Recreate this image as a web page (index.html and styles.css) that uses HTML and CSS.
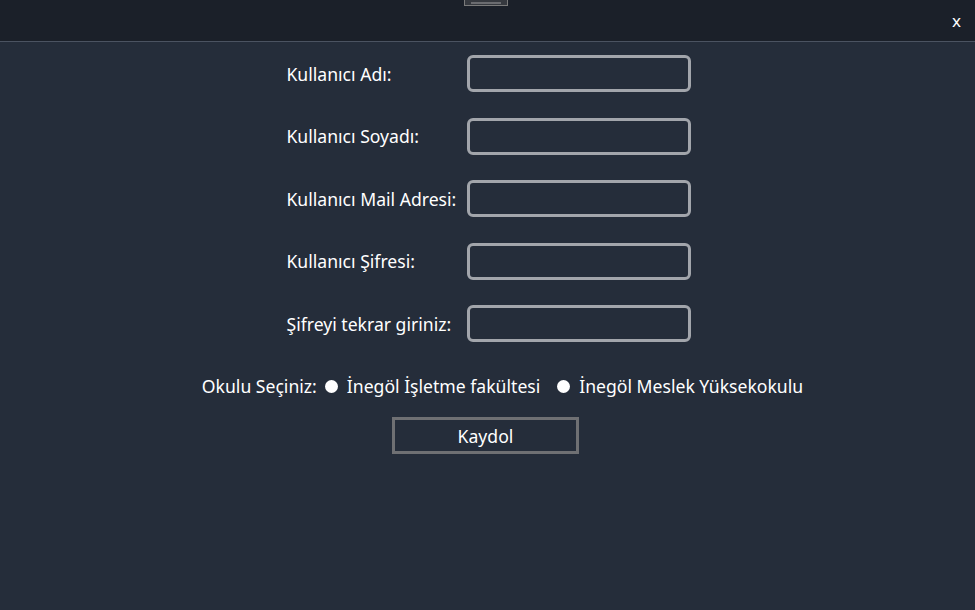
FILE: index.html
```html
<!DOCTYPE html>
<html lang="tr">
<head>
<meta charset="utf-8">
<title>Kayıt</title>
<link rel="stylesheet" href="styles.css">
</head>
<body>
<header class="topbar">
  <div class="tab"><span class="tab-bar"></span></div>
  <span class="close">x</span>
</header>
<main class="content">
  <form class="form">
    <div class="fields">
      <label class="label" for="ad">Kullanıcı Adı:</label>
      <input class="input" id="ad" type="text">
      <label class="label" for="soyad">Kullanıcı Soyadı:</label>
      <input class="input" id="soyad" type="text">
      <label class="label" for="mail">Kullanıcı Mail Adresi:</label>
      <input class="input" id="mail" type="text">
      <label class="label" for="sifre">Kullanıcı Şifresi:</label>
      <input class="input" id="sifre" type="password">
      <label class="label" for="sifre2">Şifreyi tekrar giriniz:</label>
      <input class="input" id="sifre2" type="password">
    </div>
    <div class="school">
      <span class="school-title">Okulu Seçiniz:</span>
      <label class="option"><input class="radio" type="radio" name="okul"><span>İnegöl İşletme fakültesi</span></label>
      <label class="option"><input class="radio" type="radio" name="okul"><span>İnegöl Meslek Yüksekokulu</span></label>
    </div>
    <button class="submit" type="button">Kaydol</button>
  </form>
</main>
</body>
</html>
```
FILE: styles.css
```css
html, body {
  margin: 0;
  padding: 0;
  height: 100%;
}
body {
  background: #252d3a;
  color: #ffffff;
  font-family: "Noto Sans", "Open Sans", sans-serif;
  font-size: 17.6px;
  overflow: hidden;
}
.topbar {
  height: 41px;
  background: #1b2029;
  border-bottom: 1px solid #4b5361;
  position: relative;
}
.tab {
  position: absolute;
  left: 464px;
  top: -6px;
  width: 42px;
  height: 10px;
  border: 1px solid #7a7a7a;
  background: #36393f;
  display: flex;
  align-items: flex-end;
  justify-content: center;
}
.tab-bar {
  width: 30px;
  height: 2px;
  background: #6b6c70;
  margin-bottom: 1px;
}
.close {
  position: absolute;
  right: 14px;
  top: 10px;
  font-size: 17px;
  line-height: 22px;
  color: #ffffff;
}
.content {
  display: flex;
  justify-content: center;
}
.form {
  display: flex;
  flex-direction: column;
  align-items: center;
  padding-top: 13px;
}
.fields {
  display: grid;
  grid-template-columns: 181px 224px;
  grid-auto-rows: 37px;
  row-gap: 25.5px;
  align-items: center;
  margin-left: 3px;
}
.label {
  white-space: nowrap;
}
.input {
  box-sizing: border-box;
  width: 224px;
  height: 37px;
  border: 3px solid #a2a5ab;
  border-radius: 6px;
  background: #252d3a;
  color: #fff;
  font: inherit;
  padding: 0 8px;
  outline: none;
}
.school {
  display: flex;
  align-items: center;
  margin-top: 32px;
  height: 24px;
  margin-left: 30px;
}
.option {
  display: flex;
  align-items: center;
}
.option + .option {
  margin-left: 9px;
}
.radio {
  appearance: none;
  -webkit-appearance: none;
  width: 13px;
  height: 13px;
  border-radius: 50%;
  background: #ffffff;
  margin: 0 9px 0 8px;
}
.submit {
  box-sizing: border-box;
  width: 187px;
  height: 37px;
  margin-top: 19px;
  margin-right: 4px;
  border: 3px solid #6f7073;
  background: #252d3a;
  color: #ffffff;
  font: inherit;
  cursor: pointer;
}
```
